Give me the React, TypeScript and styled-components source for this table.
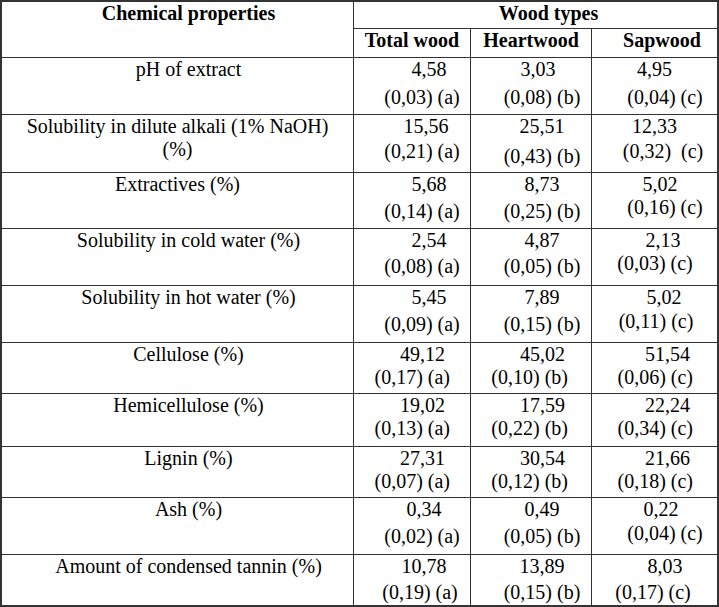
import styled, { createGlobalStyle } from "styled-components";

const GlobalStyle = createGlobalStyle`
  * {
    box-sizing: border-box;
  }
  body {
    margin: 0;
    background: #fff;
    font-family: "Liberation Serif", "Times New Roman", serif;
  }
`;

type Mode = "center" | "right";

interface Cell {
  value: string;
  stat: string;
  gap?: number;
  vOff?: number;
  sOff?: number;
}

interface Row {
  label: string[];
  indent: number;
  height: number;
  mode: Mode;
  cells: Cell[];
}

// default line offsets per column, [value, stat]
const centerOffsets = [
  [34, 20],
  [22, 22],
  [11, 21],
];
const rightOffsets = [
  [25, 20],
  [26, 23],
  [27, 24],
];

const rows: Row[] = [
  {
    label: ["pH of extract"],
    indent: 22,
    height: 57,
    mode: "center",
    cells: [
      { value: "4,58", stat: "(0,03) (a)", gap: 5 },
      { value: "3,03", stat: "(0,08) (b)", gap: 5, vOff: 14 },
      { value: "4,95", stat: "(0,04) (c)", gap: 5, vOff: 0 },
    ],
  },
  {
    label: ["Solubility in dilute alkali (1% NaOH)", "(%)"],
    indent: 0,
    height: 58,
    mode: "center",
    cells: [
      { value: "15,56", stat: "(0,21) (a)", gap: 2, vOff: 28 },
      { value: "25,51", stat: "(0,43) (b)", gap: 7 },
      { value: "12,33", stat: "(0,32)  (c)", gap: 2, vOff: 0, sOff: 17 },
    ],
  },
  {
    label: ["Extractives (%)"],
    indent: 0,
    height: 56,
    mode: "center",
    cells: [
      { value: "5,68", stat: "(0,14) (a)", gap: 4 },
      { value: "8,73", stat: "(0,25) (b)", gap: 4 },
      { value: "5,02", stat: "(0,16) (c)", gap: 0 },
    ],
  },
  {
    label: ["Solubility in cold water (%)"],
    indent: 22,
    height: 57,
    mode: "center",
    cells: [
      { value: "2,54", stat: "(0,08) (a)", gap: 3 },
      { value: "4,87", stat: "(0,05) (b)", gap: 3 },
      { value: "2,13", stat: "(0,03) (c)", gap: 0, vOff: 17, sOff: 1 },
    ],
  },
  {
    label: ["Solubility in hot water (%)"],
    indent: 22,
    height: 57,
    mode: "center",
    cells: [
      { value: "5,45", stat: "(0,09) (a)", gap: 4 },
      { value: "7,89", stat: "(0,15) (b)", gap: 4 },
      { value: "5,02", stat: "(0,11) (c)", gap: 1, vOff: 19, sOff: 3 },
    ],
  },
  {
    label: ["Cellulose (%)"],
    indent: 22,
    height: 51,
    mode: "right",
    cells: [
      { value: "49,12", stat: "(0,17) (a)" },
      { value: "45,02", stat: "(0,10) (b)" },
      { value: "51,54", stat: "(0,06) (c)" },
    ],
  },
  {
    label: ["Hemicellulose (%)"],
    indent: 22,
    height: 53,
    mode: "right",
    cells: [
      { value: "19,02", stat: "(0,13) (a)" },
      { value: "17,59", stat: "(0,22) (b)" },
      { value: "22,24", stat: "(0,34) (c)" },
    ],
  },
  {
    label: ["Lignin (%)"],
    indent: 22,
    height: 51,
    mode: "right",
    cells: [
      { value: "27,31", stat: "(0,07) (a)" },
      { value: "30,54", stat: "(0,12) (b)" },
      { value: "21,66", stat: "(0,18) (c)" },
    ],
  },
  {
    label: ["Ash (%)"],
    indent: 22,
    height: 57,
    mode: "center",
    cells: [
      { value: "0,34", stat: "(0,02) (a)", gap: 4, vOff: 24 },
      { value: "0,49", stat: "(0,05) (b)", gap: 4 },
      { value: "0,22", stat: "(0,04) (c)", gap: 1, vOff: 13 },
    ],
  },
  {
    label: ["Amount of condensed tannin (%)"],
    indent: 22,
    height: 50,
    mode: "center",
    cells: [
      { value: "10,78", stat: "(0,19) (a)", gap: 3, vOff: 24, sOff: 16 },
      { value: "13,89", stat: "(0,15) (b)", gap: 3 },
      { value: "8,03", stat: "(0,17) (c)", gap: 3, vOff: 21, sOff: -3 },
    ],
  },
];

// centred lines shift by padding on one side, right-aligned lines keep a right margin
const pads = (mode: Mode, off: number) =>
  mode === "center"
    ? { pl: Math.max(off, 0), pr: Math.max(-off, 0) }
    : { pl: 0, pr: off };

const App = () => {
  return (
    <>
      <GlobalStyle />
      <Table>
        <colgroup>
          <Col $w={352} />
          <Col $w={117} />
          <Col $w={121} />
          <Col $w={125} />
        </colgroup>
        <tbody>
          <tr>
            <HeadCell rowSpan={2} $pl={22}>
              Chemical properties
            </HeadCell>
            <HeadCell colSpan={3} $h={27} $pl={26}>
              Wood types
            </HeadCell>
          </tr>
          <tr>
            <HeadCell $h={29}>Total wood</HeadCell>
            <HeadCell $h={29}>Heartwood</HeadCell>
            <HeadCell $h={29} $pl={15}>
              Sapwood
            </HeadCell>
          </tr>
          {rows.map((row) => (
            <tr key={row.label[0]}>
              <LabelCell $h={row.height} $indent={row.indent}>
                {row.label.map((l) => (
                  <div key={l}>{l}</div>
                ))}
              </LabelCell>
              {row.cells.map((c, i) => {
                const defaults = row.mode === "center" ? centerOffsets[i] : rightOffsets[i];
                const v = pads(row.mode, c.vOff ?? defaults[0]);
                const s = pads(row.mode, c.sOff ?? defaults[1]);
                return (
                  <Td key={i} $h={row.height}>
                    <Line $align={row.mode} $pl={v.pl} $pr={v.pr}>
                      {c.value}
                    </Line>
                    <Line $align={row.mode} $pl={s.pl} $pr={s.pr} $gap={c.gap ?? 0}>
                      {c.stat}
                    </Line>
                  </Td>
                );
              })}
            </tr>
          ))}
        </tbody>
      </Table>
    </>
  );
};

const Table = styled.table`
  width: 719px;
  table-layout: fixed;
  border-collapse: separate;
  border-spacing: 0;
  border: 2px solid #333;
  font-family: "Liberation Serif", "Times New Roman", serif;
  font-size: 20px;
  line-height: 23px;
  color: #000;
`;

const Col = styled.col<{ $w: number }>`
  width: ${(p) => p.$w}px;
`;

const Td = styled.td<{ $h?: number }>`
  padding: 0;
  vertical-align: top;
  font-family: "Liberation Serif", "Times New Roman", serif;
  font-size: 20px;
  border-right: 1px solid #333;
  border-bottom: 1px solid #333;
  height: ${(p) => (p.$h ? `${p.$h}px` : "auto")};

  &:last-child {
    border-right: none;
  }

  tr:last-child > & {
    border-bottom: none;
  }
`;

const HeadCell = styled(Td)<{ $pl?: number }>`
  font-weight: bold;
  text-align: center;
  padding-left: ${(p) => p.$pl ?? 0}px;
`;

const LabelCell = styled(Td)<{ $indent: number }>`
  text-align: center;
  padding-left: ${(p) => p.$indent}px;
`;

const Line = styled.div<{ $align: Mode; $pl: number; $pr: number; $gap?: number }>`
  text-align: ${(p) => p.$align};
  white-space: pre;
  margin-top: ${(p) => p.$gap ?? 0}px;
  padding: 0 ${(p) => p.$pr}px 0 ${(p) => p.$pl}px;
`;

export default App;
